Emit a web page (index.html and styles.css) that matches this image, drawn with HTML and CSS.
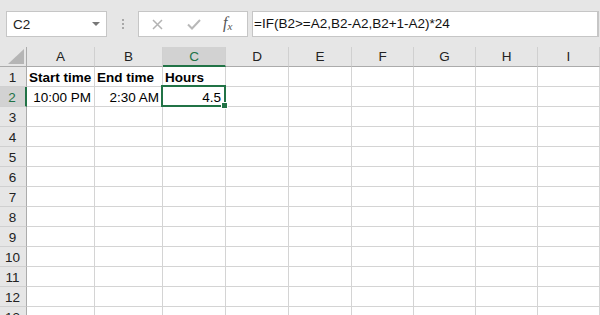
FILE: index.html
```html
<!DOCTYPE html>
<html lang="en">
<head>
    <meta charset="UTF-8">
    <title>IF time difference</title>
    <link rel="stylesheet" href="styles.css">
</head>
<body>
    <div class="toolbar">
        <div class="namebox">
            <span>C2</span>
            <span class="caret"></span>
        </div>
        <div class="grip"><i></i><i></i><i></i></div>
        <div class="buttons">
            <svg class="icon cancel" width="11" height="11" viewBox="0 0 11 11"><path d="M1 1 L10 10 M10 1 L1 10" stroke="#b3b3b3" stroke-width="1.5" fill="none"/></svg>
            <svg class="icon enter" width="14" height="11" viewBox="0 0 14 11"><path d="M1 5.5 L5 9.5 L13 1" stroke="#b8b8b8" stroke-width="2" fill="none"/></svg>
            <span class="fx">f<sub>x</sub></span>
        </div>
        <div class="formula">=IF(B2&gt;=A2,B2-A2,B2+1-A2)*24</div>
    </div>

    <div class="sheet">
        <div class="corner"><span></span></div>
        <div class="col">A</div>
        <div class="col">B</div>
        <div class="col sel">C</div>
        <div class="col">D</div>
        <div class="col">E</div>
        <div class="col">F</div>
        <div class="col">G</div>
        <div class="col">H</div>
        <div class="col">I</div>

        <div class="row">1</div>
        <div class="cell bold">Start time</div>
        <div class="cell bold">End time</div>
        <div class="cell bold">Hours</div>
        <div class="cell"></div><div class="cell"></div><div class="cell"></div><div class="cell"></div><div class="cell"></div><div class="cell"></div>

        <div class="row sel">2</div>
        <div class="cell num">10:00 PM</div>
        <div class="cell num">2:30 AM</div>
        <div class="cell num active">4.5</div>
        <div class="cell"></div><div class="cell"></div><div class="cell"></div><div class="cell"></div><div class="cell"></div><div class="cell"></div>
    </div>
    <script>
        // empty rows 3..13
        const sheet = document.querySelector('.sheet');
        for (let r = 3; r <= 13; r++) {
            const head = document.createElement('div');
            head.className = 'row';
            head.textContent = r;
            sheet.appendChild(head);
            for (let c = 0; c < 9; c++) {
                const cell = document.createElement('div');
                cell.className = 'cell';
                sheet.appendChild(cell);
            }
        }
    </script>
</body>
</html>
```

FILE: styles.css
```css
body {
    margin: 0;
    width: 600px;
    height: 315px;
    overflow: hidden;
    background: #fff;
    font-family: "Liberation Sans", Arial, sans-serif;
    font-size: 13.5px;
    color: #000;
}
.toolbar {
    height: 47px;
    background: #e6e6e6;
    display: flex;
    align-items: flex-start;
    padding: 11px 1px 0 6px;
    box-sizing: border-box;
}
.namebox {
    width: 101px;
    height: 26px;
    box-sizing: border-box;
    border: 1px solid #c6c6c6;
    background: #fff;
    display: flex;
    align-items: center;
    justify-content: space-between;
    padding: 0 6px 0 6px;
    color: #222;
}
.caret {
    width: 0;
    height: 0;
    border-left: 4px solid transparent;
    border-right: 4px solid transparent;
    border-top: 4px solid #777;
}
.grip {
    width: 31px;
    height: 26px;
    display: flex;
    flex-direction: column;
    align-items: center;
    justify-content: center;
    gap: 2px;
}
.grip i {
    width: 2px;
    height: 2px;
    background: #a8a8a8;
}
.buttons {
    width: 110px;
    height: 26px;
    box-sizing: border-box;
    border: 1px solid #c6c6c6;
    background: #fff;
    display: flex;
    align-items: center;
    padding: 0 0 0 13px;
}
.enter {
    margin-left: 24px;
}
.fx {
    margin-left: 22px;
    font-family: "Liberation Serif", serif;
    font-style: italic;
    font-size: 16px;
    color: #555;
    margin-bottom: 3px;
}
.fx sub {
    font-size: 11px;
    vertical-align: -2px;
}
.formula {
    flex: 1;
    height: 26px;
    margin-left: 4px;
    box-sizing: border-box;
    border: 1px solid #c6c6c6;
    border-right-width: 2px;
    background: #fff;
    line-height: 24px;
    padding-left: 1px;
    color: #111;
}
.sheet {
    display: grid;
    grid-template-columns: 27px 68px 68px 63px 63px 63px 62px 62px 62px 62px;
    grid-auto-rows: 20px;
}
.corner, .col, .row {
    background: #e6e6e6;
    box-sizing: border-box;
    color: #222;
}
.corner {
    border-right: 1px solid #ababab;
    border-bottom: 1px solid #ababab;
    position: relative;
}
.corner span {
    position: absolute;
    right: 2px;
    bottom: 2px;
    width: 0;
    height: 0;
    border-left: 16px solid transparent;
    border-bottom: 15px solid #b5b5b5;
}
.col {
    border-right: 1px solid #d0d0d0;
    border-bottom: 1px solid #ababab;
    text-align: center;
    line-height: 20px;
}
.col.sel {
    background: #d2d2d2;
    border-bottom: 2px solid #217346;
    color: #217346;
}
.row {
    border-right: 1px solid #ababab;
    border-bottom: 1px solid #d0d0d0;
    text-align: center;
    line-height: 21px;
    padding-right: 1px;
}
.row.sel {
    background: #d2d2d2;
    border-right: 2px solid #217346;
    color: #217346;
}
.cell {
    border-right: 1px solid #d4d4d4;
    border-bottom: 1px solid #d4d4d4;
    box-sizing: border-box;
    line-height: 21px;
    padding: 0 3px 0 2px;
    white-space: nowrap;
    overflow: visible;
}
.bold {
    font-weight: bold;
}
.num {
    text-align: right;
}
.active {
    position: relative;
    padding-right: 4px;
}
.active::after {
    content: "";
    position: absolute;
    top: -2px;
    left: -2px;
    right: -1px;
    bottom: -1px;
    border: 2px solid #217346;
}
.active::before {
    content: "";
    position: absolute;
    right: -3px;
    bottom: -3px;
    width: 5px;
    height: 5px;
    background: #217346;
    border: 1px solid #fff;
    z-index: 1;
}
```
